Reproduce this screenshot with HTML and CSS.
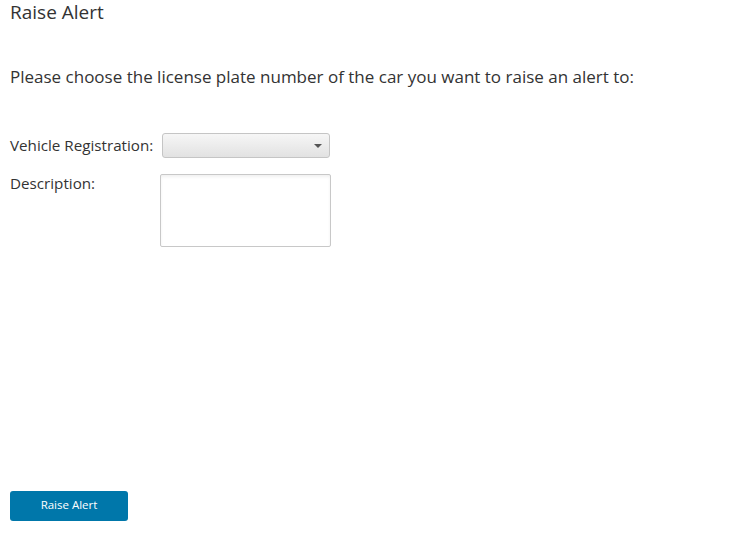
FILE: index.html
```html
<!DOCTYPE html>
<html>
<head>
<meta charset="utf-8">
<link rel="stylesheet" href="styles.css">
</head>
<body>
<div class="page">
  <h1 class="title">Raise Alert</h1>
  <p class="intro">Please choose the license plate number of the car you want to raise an alert to:</p>
  <div class="form">
    <div class="row">
      <label class="label">Vehicle Registration:</label>
      <div class="select"><span class="caret"></span></div>
    </div>
    <div class="row row-top">
      <label class="label label-desc">Description:</label>
      <div class="textarea"></div>
    </div>
  </div>
  <button class="btn">Raise Alert</button>
</div>
</body>
</html>
```
FILE: styles.css
```css
html, body { margin: 0; padding: 0; background: #fff; }
body { font-family: "Open Sans", "Noto Sans", sans-serif; color: #333; }
.page {
  height: 560px;
  box-sizing: border-box;
  padding: 0 10px 39px 10px;
  display: flex;
  flex-direction: column;
}
.title {
  margin: 0;
  font-size: 19px;
  font-weight: 400;
  line-height: 24px;
  color: #333;
}
.intro {
  margin: 41px 0 0 0;
  font-size: 17px;
  line-height: 24px;
}
.form { margin-top: 44px; display: flex; flex-direction: column; gap: 16px; }
.row { display: flex; align-items: center; }
.row-top { align-items: flex-start; }
.label { font-size: 15.2px; line-height: 22px; padding-bottom: 2px; width: 152px; white-space: nowrap; }
.label-desc { width: 150px; line-height: 18px; padding-bottom: 0; }
.select {
  width: 166px;
  height: 23px;
  border: 1px solid #c5c5c5;
  border-radius: 3px;
  background: linear-gradient(#f6f6f6, #e2e2e2);
  position: relative;
}
.caret {
  position: absolute;
  right: 7px;
  top: 10px;
  width: 0; height: 0;
  border-left: 4px solid transparent;
  border-right: 4px solid transparent;
  border-top: 4px solid #555;
}
.textarea {
  width: 169px;
  height: 71px;
  border: 1px solid #c8c8c8;
  border-radius: 2px;
  box-shadow: inset 0 2px 3px rgba(0,0,0,0.06);
  background: #fff;
}
.btn {
  margin-top: auto;
  align-self: flex-start;
  width: 118px;
  height: 30px;
  border: none;
  border-radius: 3px;
  background: #0077aa;
  color: #fff;
  font-family: "Open Sans", "Noto Sans", sans-serif;
  font-size: 11.5px;
  line-height: 28px;
  padding: 0 0 2px 0;
}
```
